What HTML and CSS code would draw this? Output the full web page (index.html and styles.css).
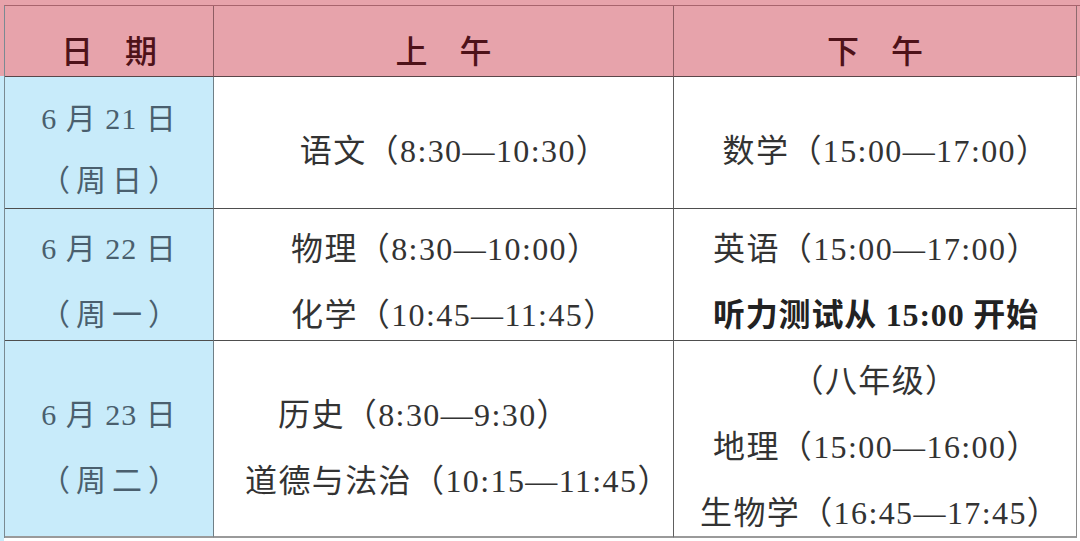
FILE: index.html
```html
<!DOCTYPE html>
<html lang="zh-CN">
<head>
<meta charset="utf-8">
<title>考试时间安排</title>
<link rel="stylesheet" href="styles.css">
</head>
<body>
<div class="page">
  <div class="sched">
    <div class="cell head c1">日　期</div>
    <div class="cell head c2">上　午</div>
    <div class="cell head c3">下　午</div>

    <div class="cell date r1"><div class="ln">6 月 21 日</div><div class="ln wk">（周日）</div></div>
    <div class="cell body r1 center"><div class="ln">语文（8:30—10:30）</div></div>
    <div class="cell body r1 center last"><div class="ln">数学（15:00—17:00）</div></div>

    <div class="cell date r2"><div class="ln">6 月 22 日</div><div class="ln wk">（周一）</div></div>
    <div class="cell body r2 mid2"><div class="ln">物理（8:30—10:00）</div><div class="ln">化学（10:45—11:45）</div></div>
    <div class="cell body r2 right2 last"><div class="ln">英语（15:00—17:00）</div><div class="ln strong">听力测试从 15:00 开始</div></div>

    <div class="cell date r3 bottom"><div class="ln">6 月 23 日</div><div class="ln wk">（周二）</div></div>
    <div class="cell body r3 bottom mid3"><div class="ln hist">历史（8:30—9:30）</div><div class="ln moral">道德与法治（10:15—11:45）</div></div>
    <div class="cell body r3 bottom right3 last"><div class="ln grade">（八年级）</div><div class="ln geo">地理（15:00—16:00）</div><div class="ln bio">生物学（16:45—17:45）</div></div>
  </div>
</div>
</body>
</html>
```

FILE: styles.css
```css
html, body {
  margin: 0;
  padding: 0;
}
body {
  width: 1080px;
  height: 541px;
  overflow: hidden;
  background: #ffffff;
}
.page {
  width: 1080px;
  height: 541px;
  box-sizing: border-box;
  padding: 5px 0 0 4px;
  background:
    linear-gradient(to right, #c8ebfa 4px, transparent 4px) 0 76px / 100% 465px no-repeat,
    linear-gradient(#e7a3ab 76px, #ffffff 76px);
}
.sched {
  display: grid;
  grid-template-columns: 209px 460px 403px;
  grid-template-rows: 71px 132px 132px 197px;
  border-top: 1px solid #a8646d;
  border-left: 1px solid #7a8a92;
}
.cell {
  box-sizing: border-box;
  border-right: 1px solid #5e5e5e;
  border-bottom: 1px solid #4e4e4e;
  display: flex;
  flex-direction: column;
  justify-content: flex-start;
}
.head {
  background: #e7a3ab;
  color: #4e1219;
  font-family: "Noto Sans CJK SC", sans-serif;
  font-weight: 500;
  font-size: 32px;
  line-height: 40px;
  align-items: center;
  padding-top: 23px;
  border-bottom-color: #5a4649;
  border-right-color: #8e5d63;
}
.head.c3 { border-right-color: #8e6a6e; }
.date {
  background: #c8ebfa;
  color: #4a5f6e;
  font-family: "Liberation Serif", "Noto Sans CJK SC", serif;
  font-size: 30px;
  align-items: center;
  border-right-color: #6f7f86;
}
.date .ln { letter-spacing: 1px; }
.body {
  background: #ffffff;
  color: #333333;
  font-family: "Liberation Serif", "Noto Sans CJK SC", serif;
  font-size: 32px;
}
.body .ln { letter-spacing: 1.4px; }
.last { border-right-color: #8a8a8a; }
.bottom { border-bottom: 2px solid #9a9a9a; }
.ln {
  white-space: nowrap;
}
.date .wk { letter-spacing: 6px; padding-left: 6px; }

/* row 1 */
.r1 .ln { line-height: 62px; }
.date.r1 { padding-top: 11px; }
.body.r1 { padding-top: 43px; padding-left: 22px; }
.center { align-items: center; }

/* row 2 */
.r2 .ln { line-height: 66px; }
.r2 { padding-top: 7px; }
.mid2 { align-items: flex-start; padding-left: 77px; }
.right2 { align-items: flex-start; padding-left: 39px; }
.body .strong {
  font-family: "Liberation Serif", "Noto Sans CJK SC", sans-serif;
  font-weight: 700;
  color: #222222;
  letter-spacing: 0.8px;
}

/* row 3 */
.r3 .ln { line-height: 66px; }
.date.r3 { padding-top: 41px; }
.mid3 { align-items: flex-start; padding-top: 41px; }
.hist { margin-left: 64px; }
.moral { margin-left: 31px; }
.right3 { align-items: flex-start; padding-top: 7px; }
.grade { align-self: center; }
.geo { margin-left: 39px; }
.bio { margin-left: 26px; }
```
